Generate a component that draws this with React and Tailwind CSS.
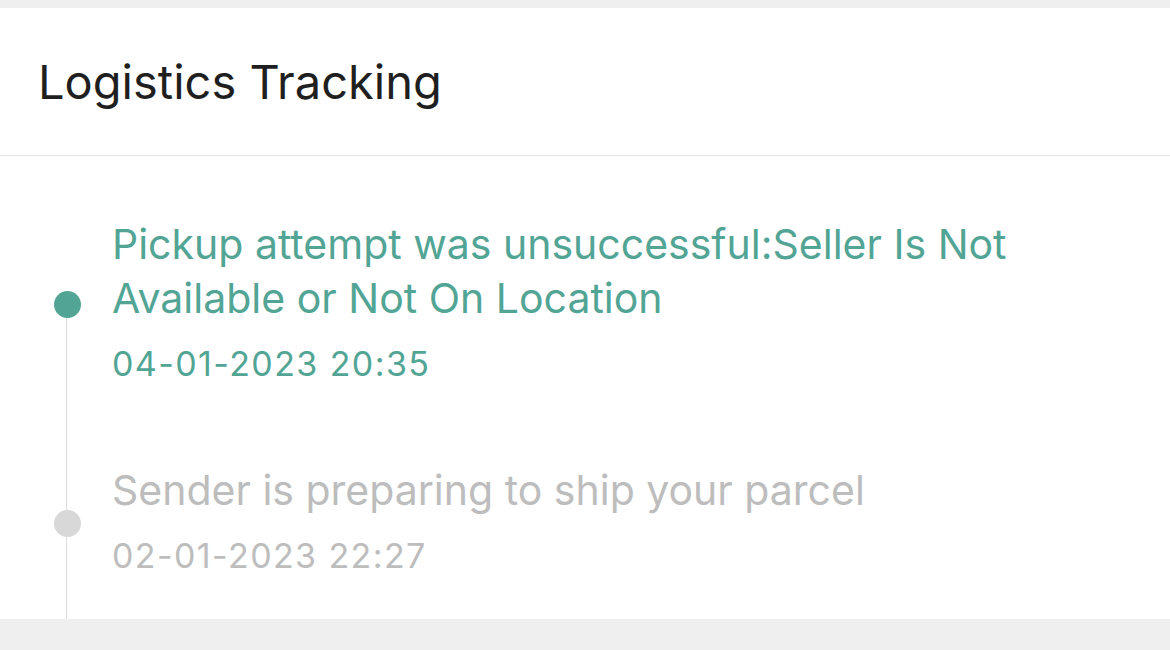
const events = [
  {
    title: 'Pickup attempt was unsuccessful:Seller Is Not Available or Not On Location',
    time: '04-01-2023 20:35',
    active: true,
  },
  {
    title: 'Sender is preparing to ship your parcel',
    time: '02-01-2023 22:27',
    active: false,
  },
]

function TimelineItem({ item }) {
  return (
    <div className="flex items-center">
      <div className="w-[112px] shrink-0 flex pl-[54px] pt-[7px]">
        <div
          className={
            item.active
              ? 'relative z-10 w-[27px] h-[27px] rounded-full bg-[#52a595]'
              : 'relative z-10 w-[27px] h-[27px] rounded-full bg-[#d8d8d8]'
          }
        />
      </div>
      <div className={item.active ? 'pr-[80px] text-[#52a595]' : 'pr-[80px] text-[#bdbdbd]'}>
        <div className="text-[41px] leading-[54px]">{item.title}</div>
        <div className="mt-[19px] text-[34px] leading-[40px] tracking-[1.4px]">{item.time}</div>
      </div>
    </div>
  )
}

export default function App() {
  return (
    <div
      className="min-h-[650px] bg-[#efefef] pt-2 pb-[30px]"
      style={{ fontFamily: 'Inter, "Noto Sans", sans-serif' }}
    >
      <div className="bg-white">
        <div className="h-[148px] flex items-center px-[38px] border-b border-[#e5e5e5]">
          <h1 className="text-[47px] text-[#1f1f1f] leading-none">Logistics Tracking</h1>
        </div>
        <div className="relative pt-[61px] pb-[43px] flex flex-col gap-[79px]">
          <div className="absolute left-[66px] top-[149px] bottom-0 w-px bg-[#dcdcdc]" />
          {events.map((e) => (
            <TimelineItem key={e.time} item={e} />
          ))}
        </div>
      </div>
    </div>
  )
}
